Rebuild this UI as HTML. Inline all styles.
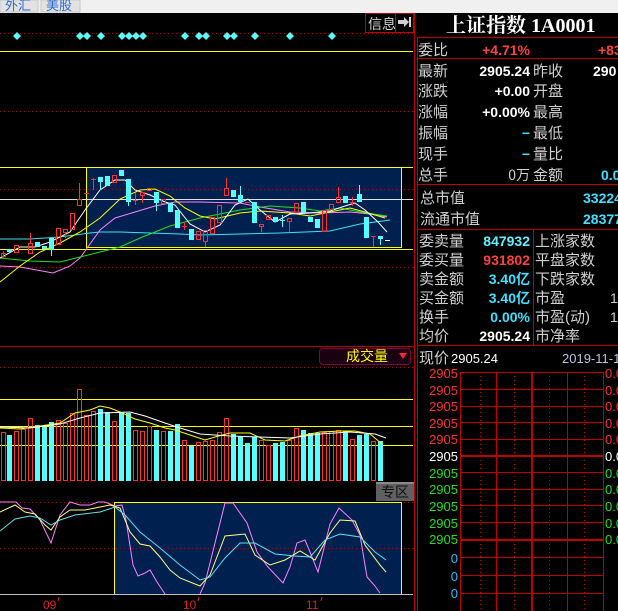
<!DOCTYPE html>
<html><head><meta charset="utf-8"><style>
html,body{margin:0;padding:0;background:#000;width:618px;height:611px;overflow:hidden}
svg{display:block}
text{font-family:"Liberation Sans","Noto Sans CJK SC",sans-serif}
.cn{font-family:"Noto Sans CJK SC","WenQuanYi Zen Hei",sans-serif}
</style></head><body>
<svg width="618" height="611" viewBox="0 0 618 611" xmlns="http://www.w3.org/2000/svg">
<rect x="0" y="0" width="618" height="611" fill="#000"/>
<rect x="0" y="0" width="618" height="13" fill="#f0f0f0"/>
<rect x="0" y="0" width="38" height="12" fill="#e2e2e2" stroke="#c8c8c8"/>
<rect x="41" y="0" width="39" height="12" fill="#e2e2e2" stroke="#c8c8c8"/>
<text x="5" y="10" font-size="13" fill="#2a6ad0" class="cn">外汇</text>
<text x="46" y="10" font-size="13" fill="#2a6ad0" class="cn">美股</text>

<rect x="365.5" y="13.5" width="48" height="19" fill="#000" stroke="#c00000"/>
<line x1="395.5" y1="13" x2="395.5" y2="33" stroke="#c00000"/>
<text x="368" y="29" font-size="14" fill="#d0d0d0" class="cn">信息</text>
<path d="M398 20h6v-3l5 5-5 5v-3h-6z" fill="#d0d0d0"/><rect x="409" y="17" width="2" height="10" fill="#d0d0d0"/>

<line x1="0" y1="33.5" x2="413" y2="33.5" stroke="#b00000" stroke-dasharray="1,3"/>
<g fill="#55ffff">
<path d="M17 32l4 4-4 4-4-4z"/><path d="M80 32l4 4-4 4-4-4z"/><path d="M87 32l4 4-4 4-4-4z"/><path d="M101 32l4 4-4 4-4-4z"/><path d="M122 32l4 4-4 4-4-4z"/><path d="M129 32l4 4-4 4-4-4z"/><path d="M136 32l4 4-4 4-4-4z"/><path d="M143 32l4 4-4 4-4-4z"/><path d="M185 32l4 4-4 4-4-4z"/><path d="M199 32l4 4-4 4-4-4z"/><path d="M206 32l4 4-4 4-4-4z"/><path d="M227 32l4 4-4 4-4-4z"/><path d="M234 32l4 4-4 4-4-4z"/><path d="M255 32l4 4-4 4-4-4z"/><path d="M290 32l4 4-4 4-4-4z"/><path d="M332 32l4 4-4 4-4-4z"/>
</g>
<line x1="0" y1="51.5" x2="413" y2="51.5" stroke="#ffff00"/>
<line x1="0" y1="111.5" x2="413" y2="111.5" stroke="#b00000" stroke-dasharray="1,3"/>
<line x1="0" y1="167.5" x2="413" y2="167.5" stroke="#ffff00"/>
<rect x="86.5" y="167.5" width="315" height="80" fill="#002050" stroke="#ffff00"/>
<line x1="0" y1="189.5" x2="413" y2="189.5" stroke="#b00000" stroke-dasharray="1,3"/>
<line x1="0" y1="199.5" x2="413" y2="199.5" stroke="#e0e0e0"/>
<line x1="0" y1="249.5" x2="413" y2="249.5" stroke="#ffff00"/>
<line x1="0" y1="267.5" x2="413" y2="267.5" stroke="#b00000" stroke-dasharray="1,3"/>

<g fill="none" stroke-width="1">
<polyline stroke="#40e0f0" points="0,239 30,239 60,237 90,233 100,232 120,232 180,234 200,235 240,234 280,233 330,231 360,224 390,220"/>
<polyline stroke="#ff80ff" points="0,266 20,267 53,273 70,266 80,258 90,244 100,230 115,218 135,212 155,206 175,202 200,202 240,203 260,207 290,212 320,213 350,212 370,214 387,217"/>
<polyline stroke="#20e020" points="0,258 30,261 60,262 80,257 100,252 120,247 140,238 170,226 200,218 240,210 270,206 300,208 320,211 340,208 360,212 387,216"/>
<polyline stroke="#ffff00" points="0,282 20,266 40,252 60,243 80,232 100,218 120,199 140,190 155,189 170,196 185,208 200,216 215,219 240,213 260,211 290,213 310,216 330,212 350,208 365,212 385,218"/>
<polyline stroke="#ffffff" points="0,258 20,247 35,247 50,242 70,232 85,210 100,190 115,180 125,180 135,190 150,195 165,202 175,205 190,224 205,232 220,225 235,205 248,199 260,210 275,222 290,214 310,213 330,211 345,206 355,203 365,210 378,222 387,232"/>
</g>
<g stroke-width="1">
<g fill="none" stroke="#ff3030">
<rect x="1.5" y="253.5" width="4" height="3"/><line x1="3.5" y1="251" x2="3.5" y2="259"/>
<rect x="14.5" y="245.5" width="4" height="7"/>
<rect x="28.5" y="243.5" width="4" height="10"/><line x1="30.5" y1="233" x2="30.5" y2="243"/>
<rect x="56.5" y="228.5" width="4" height="16"/>
<rect x="63.5" y="229.5" width="4" height="3"/><line x1="65.5" y1="233" x2="65.5" y2="238"/>
<rect x="70.5" y="213.5" width="4" height="16"/>
<rect x="77.5" y="199.5" width="4" height="6"/><line x1="79.5" y1="183" x2="79.5" y2="199"/>
<line x1="84" y1="193.5" x2="89" y2="193.5"/>
<line x1="93.5" y1="178" x2="93.5" y2="190"/><line x1="91" y1="179.5" x2="96" y2="179.5"/>
<rect x="112.5" y="175.5" width="4" height="7"/>
<line x1="133" y1="200.5" x2="138" y2="200.5"/><line x1="135.5" y1="193" x2="135.5" y2="205"/>
<rect x="140.5" y="192.5" width="4" height="3"/><line x1="142.5" y1="195" x2="142.5" y2="203"/>
<rect x="147.5" y="188.5" width="4" height="2"/>
<rect x="161.5" y="199.5" width="4" height="4"/>
<line x1="182" y1="226.5" x2="187" y2="226.5"/><line x1="184.5" y1="222" x2="184.5" y2="230"/>
<rect x="196.5" y="231.5" width="4" height="8"/>
<rect x="203.5" y="230.5" width="4" height="11"/><line x1="205.5" y1="241" x2="205.5" y2="247"/>
<rect x="210.5" y="217.5" width="4" height="16"/>
<rect x="217.5" y="205.5" width="4" height="17"/>
<rect x="224.5" y="188.5" width="4" height="7"/><line x1="226.5" y1="178" x2="226.5" y2="188"/>
<line x1="245" y1="202.5" x2="250" y2="202.5"/>
<rect x="259.5" y="224.5" width="4" height="2"/><line x1="261.5" y1="226" x2="261.5" y2="232"/>
<rect x="266.5" y="215.5" width="4" height="4"/>
<rect x="287.5" y="218.5" width="4" height="3"/><line x1="289.5" y1="221" x2="289.5" y2="232"/>
<rect x="294.5" y="203.5" width="4" height="9"/>
<rect x="322.5" y="210.5" width="4" height="21"/>
<rect x="329.5" y="204.5" width="4" height="5"/>
<rect x="336.5" y="197.5" width="4" height="5"/><line x1="338.5" y1="187" x2="338.5" y2="197"/>
<line x1="350" y1="202.5" x2="355" y2="202.5"/><line x1="352.5" y1="197" x2="352.5" y2="206"/>
<line x1="371" y1="236.5" x2="376" y2="236.5"/><line x1="373.5" y1="236" x2="373.5" y2="247"/>
</g>
<g fill="#55ffff" stroke="#55ffff">
<rect x="7.5" y="249.5" width="4" height="2"/>
<rect x="35.5" y="242.5" width="4" height="4"/>
<rect x="42.5" y="246.5" width="4" height="2"/>
<rect x="49.5" y="238.5" width="4" height="11"/><line x1="51.5" y1="250" x2="51.5" y2="256"/>
<rect x="98.5" y="177.5" width="4" height="4"/><line x1="100.5" y1="181" x2="100.5" y2="190"/>
<rect x="105.5" y="176.5" width="4" height="9"/>
<rect x="119.5" y="170.5" width="4" height="5"/>
<rect x="126.5" y="179.5" width="4" height="22"/><line x1="128.5" y1="202" x2="128.5" y2="206"/>
<rect x="154.5" y="192.5" width="4" height="10"/><line x1="156.5" y1="203" x2="156.5" y2="211"/>
<rect x="168.5" y="203.5" width="4" height="8"/>
<rect x="175.5" y="210.5" width="4" height="17"/>
<rect x="189.5" y="229.5" width="4" height="10"/>
<rect x="231.5" y="190.5" width="4" height="6"/>
<rect x="238.5" y="195.5" width="4" height="6"/><line x1="240.5" y1="186" x2="240.5" y2="195"/>
<rect x="252.5" y="202.5" width="4" height="20"/>
<rect x="273.5" y="217.5" width="4" height="4"/>
<line x1="280" y1="220.5" x2="285" y2="220.5"/><line x1="282.5" y1="215" x2="282.5" y2="227"/>
<rect x="301.5" y="202.5" width="4" height="10"/>
<rect x="308.5" y="217.5" width="4" height="4"/>
<rect x="315.5" y="219.5" width="4" height="8"/>
<rect x="343.5" y="196.5" width="4" height="6"/>
<rect x="357.5" y="194.5" width="4" height="7"/><line x1="359.5" y1="185" x2="359.5" y2="194"/>
<rect x="364.5" y="217.5" width="4" height="20"/>
<rect x="378.5" y="236.5" width="4" height="2"/><line x1="380.5" y1="239" x2="380.5" y2="245"/>
</g>
<line x1="385" y1="240.5" x2="390" y2="240.5" stroke="#fff"/>
</g>

<line x1="414.5" y1="13" x2="414.5" y2="611" stroke="#c00000"/>
<line x1="0" y1="346.5" x2="414" y2="346.5" stroke="#c00000"/>

<rect x="319.5" y="348.5" width="91" height="16" rx="3" fill="#1a0010" stroke="#800040"/>
<text x="346" y="361" font-size="14" fill="#ffff00" class="cn">成交量</text>
<path d="M399 353h8l-4 6z" fill="#ff2040"/>
<line x1="0" y1="367.5" x2="413" y2="367.5" stroke="#b00000" stroke-dasharray="1,3"/>
<line x1="0" y1="399.5" x2="413" y2="399.5" stroke="#ffff00"/>
<line x1="0" y1="426.5" x2="413" y2="426.5" stroke="#ffff00"/>
<line x1="0" y1="445.5" x2="413" y2="445.5" stroke="#ffff00"/>
<g fill="none" stroke="#ff3030">
<rect x="1.5" y="432.5" width="4" height="48"/><rect x="14.5" y="431.5" width="4" height="49"/><rect x="21.5" y="429.5" width="4" height="51"/><rect x="28.5" y="418.5" width="4" height="62"/>
<rect x="56.5" y="420.5" width="4" height="60"/><rect x="63.5" y="423.5" width="4" height="57"/><rect x="70.5" y="413.5" width="4" height="67"/><rect x="77.5" y="389.5" width="4" height="91"/><rect x="84.5" y="415.5" width="4" height="65"/><rect x="91.5" y="411.5" width="4" height="69"/>
<rect x="112.5" y="421.5" width="4" height="59"/><rect x="133.5" y="430.5" width="4" height="50"/><rect x="140.5" y="431.5" width="4" height="49"/><rect x="147.5" y="426.5" width="4" height="54"/><rect x="161.5" y="431.5" width="4" height="49"/>
<rect x="182.5" y="440.5" width="4" height="40"/><rect x="196.5" y="442.5" width="4" height="38"/><rect x="203.5" y="441.5" width="4" height="39"/><rect x="210.5" y="440.5" width="4" height="40"/><rect x="217.5" y="432.5" width="4" height="48"/><rect x="224.5" y="418.5" width="4" height="62"/>
<rect x="259.5" y="440.5" width="4" height="40"/><rect x="266.5" y="445.5" width="4" height="35"/><rect x="287.5" y="440.5" width="4" height="40"/><rect x="294.5" y="428.5" width="4" height="52"/>
<rect x="322.5" y="432.5" width="4" height="48"/><rect x="329.5" y="431.5" width="4" height="49"/><rect x="336.5" y="430.5" width="4" height="50"/><rect x="350.5" y="439.5" width="4" height="41"/><rect x="371.5" y="441.5" width="4" height="39"/>
</g>
<g fill="#55ffff">
<rect x="7" y="435" width="5" height="46"/><rect x="35" y="425" width="5" height="56"/><rect x="42" y="427" width="5" height="54"/><rect x="49" y="422" width="5" height="59"/>
<rect x="98" y="409" width="5" height="72"/><rect x="105" y="412" width="5" height="69"/><rect x="119" y="412" width="5" height="69"/><rect x="126" y="413" width="5" height="68"/>
<rect x="154" y="430" width="5" height="51"/><rect x="168" y="431" width="5" height="50"/><rect x="175" y="424" width="5" height="57"/><rect x="189" y="446" width="5" height="35"/>
<rect x="231" y="434" width="5" height="47"/><rect x="238" y="436" width="5" height="45"/><rect x="245" y="443" width="5" height="38"/><rect x="252" y="437" width="5" height="44"/>
<rect x="273" y="443" width="5" height="38"/><rect x="280" y="442" width="5" height="39"/><rect x="301" y="430" width="5" height="51"/><rect x="308" y="433" width="5" height="48"/><rect x="315" y="433" width="5" height="48"/>
<rect x="343" y="431" width="5" height="50"/><rect x="357" y="435" width="5" height="46"/><rect x="364" y="434" width="5" height="47"/><rect x="378" y="441" width="5" height="40"/>
</g>
<polyline fill="none" stroke="#ffff00" points="0,428 20,429 40,426 60,423 75,413 90,410 100,406 110,408 120,412 135,419 150,423 165,428 175,430 190,435 205,440 215,437 230,433 250,433 265,440 285,441 300,436 320,432 340,431 355,431 370,434 382,444"/>
<polyline fill="none" stroke="#ffffff" points="0,427 30,428 60,424 80,418 100,413 130,412 145,416 165,423 180,428 200,434 230,436 260,437 290,438 320,434 350,432 375,434 386,438"/>

<rect x="376" y="482" width="38" height="19" fill="#606060"/>
<rect x="376" y="482" width="38" height="2" fill="#8a8a8a"/>
<text x="381" y="497" font-size="14" fill="#101010" class="cn">专区</text>

<line x1="0" y1="502.5" x2="413" y2="502.5" stroke="#b00000" stroke-dasharray="1,3"/>
<rect x="114.5" y="502.5" width="287" height="92" fill="#002050" stroke="#ffff00"/>
<line x1="0" y1="548.5" x2="413" y2="548.5" stroke="#b00000" stroke-dasharray="1,3"/>
<line x1="0" y1="594.5" x2="413" y2="594.5" stroke="#c0c0c0"/>
<g fill="none">
<polyline stroke="#ff80ff" points="0,502 16,502 22,508 30,509 40,520 51,543 60,515 70,502 80,505 90,505 98,502 105,502 115,506 122,505 126,520 133,565 138,576 145,573 150,570 157,582 165,594"/>
<polyline stroke="#ff80ff" points="200,594 205,583 225,503 233,503 247,523 257,552 268,567 283,583 290,567 297,543 305,540 310,552 318,572 330,524 339,508 352,520 360,535 367,577 375,586 380,593"/>
<polyline stroke="#ffff80" points="0,512 15,505 25,512 35,514 45,525 51,530 60,517 70,510 85,510 100,507 110,505 120,508 130,532 140,544 150,546 160,557 170,570 180,578 200,586 210,575 225,536 245,534 255,555 270,565 285,560 300,551 315,560 330,533 340,520 355,521 365,545 380,565 386,572"/>
<polyline stroke="#60e0f0" points="0,531 15,519 30,516 40,518 51,525 60,520 75,515 100,512 115,507 125,515 140,532 160,548 180,565 200,580 210,577 225,558 240,543 255,543 275,554 295,556 310,557 325,540 340,534 360,537 375,552 386,560"/>
</g>
<g font-size="12" fill="#e02020"><text x="43" y="609">09</text><text x="183" y="609">10</text><text x="306" y="609">11</text></g>
<g stroke="#e02020"><line x1="59" y1="597" x2="58" y2="601"/><line x1="199" y1="597" x2="198" y2="601"/><line x1="322" y1="597" x2="321" y2="601"/></g>

<line x1="417.5" y1="37" x2="417.5" y2="611" stroke="#c00000"/>
<text x="446" y="32" font-size="20" font-weight="bold" fill="#fff" style="font-family:'Liberation Serif','Noto Serif CJK SC',serif">上证指数 1A0001</text>
<g stroke="#c00000">
<line x1="417" y1="37.5" x2="618" y2="37.5"/>
<line x1="417" y1="58.5" x2="618" y2="58.5"/>
<line x1="417" y1="184.5" x2="618" y2="184.5"/>
<line x1="417" y1="229.5" x2="618" y2="229.5"/>
<line x1="417" y1="345.5" x2="618" y2="345.5"/>
<line x1="533.5" y1="229" x2="533.5" y2="345"/>
</g>
<g font-size="15" fill="#d0d0d0" class="cn">
<text x="418" y="55">委比</text>
<text x="418" y="76">最新</text><text x="533" y="76">昨收</text>
<text x="418" y="96">涨跌</text><text x="533" y="96">开盘</text>
<text x="418" y="117">涨幅</text><text x="533" y="117">最高</text>
<text x="418" y="138">振幅</text><text x="533" y="138">最低</text>
<text x="418" y="159">现手</text><text x="533" y="159">量比</text>
<text x="418" y="180">总手</text><text x="533" y="180">金额</text>
<text x="420" y="203">总市值</text>
<text x="420" y="224">流通市值</text>
<text x="419" y="246">委卖量</text><text x="535" y="246">上涨家数</text>
<text x="419" y="265">委买量</text><text x="535" y="265">平盘家数</text>
<text x="419" y="284">卖金额</text><text x="535" y="284">下跌家数</text>
<text x="419" y="303">买金额</text><text x="535" y="303">市盈</text>
<text x="419" y="322">换手</text><text x="535" y="322">市盈(动)</text>
<text x="419" y="341">均价</text><text x="535" y="341">市净率</text>
<text x="419" y="363">现价</text>
</g>
<g font-size="14" font-weight="bold" text-anchor="end">
<text x="530" y="55" fill="#ff4040">+4.71%</text>
<text x="530" y="76" fill="#fff">2905.24</text>
<text x="530" y="96" fill="#fff">+0.00</text>
<text x="530" y="117" fill="#fff">+0.00%</text>
<text x="530" y="138" fill="#40e0ff">−</text>
<text x="530" y="159" fill="#40e0ff">−</text>
<text x="530" y="180" fill="#d0d0d0" font-weight="normal" class="cn">0万</text>
<text x="530" y="246" fill="#60f0ff">847932</text>
<text x="530" y="265" fill="#ff4040">931802</text>
<text x="530" y="284" fill="#40e0ff">3.40亿</text>
<text x="530" y="303" fill="#40e0ff">3.40亿</text>
<text x="530" y="322" fill="#40e0ff">0.00%</text>
<text x="530" y="341" fill="#fff">2905.24</text>
</g>
<g font-size="14" font-weight="bold">
<text x="598" y="55" fill="#ff4040">+83</text>
<text x="593" y="76" fill="#fff">290</text>
<text x="601" y="180" fill="#40e0ff">0.0</text>
<text x="583" y="203" fill="#40e0ff">33224</text>
<text x="583" y="224" fill="#40e0ff">28377</text>
<text x="610" y="303" fill="#d0d0d0" font-weight="normal">1</text>
<text x="610" y="322" fill="#d0d0d0" font-weight="normal">1</text>
</g>
<text x="451" y="363" font-size="13" fill="#fff">2905.24</text>
<text x="562" y="363" font-size="13" fill="#c0c0e0">2019-11-1</text>

<g stroke="#c00000">
<line x1="460.5" y1="372" x2="460.5" y2="611"/><line x1="496.5" y1="372" x2="496.5" y2="611"/>
<line x1="532" y1="372" x2="532" y2="611" stroke-width="2"/><line x1="567.5" y1="372" x2="567.5" y2="611"/><line x1="603.5" y1="372" x2="603.5" y2="611"/>
<g stroke-dasharray="1,3"><line x1="480.5" y1="372" x2="480.5" y2="611"/><line x1="514.5" y1="372" x2="514.5" y2="611"/><line x1="549.5" y1="372" x2="549.5" y2="611"/><line x1="584.5" y1="372" x2="584.5" y2="611"/></g>
<line x1="460" y1="372.5" x2="604" y2="372.5"/><line x1="460" y1="389.5" x2="604" y2="389.5"/><line x1="460" y1="406.5" x2="604" y2="406.5"/><line x1="460" y1="422.5" x2="604" y2="422.5"/><line x1="460" y1="439.5" x2="604" y2="439.5"/>
<line x1="460" y1="456" x2="604" y2="456" stroke-width="2"/>
<line x1="460" y1="472.5" x2="604" y2="472.5"/><line x1="460" y1="489.5" x2="604" y2="489.5"/><line x1="460" y1="505.5" x2="604" y2="505.5"/><line x1="460" y1="522.5" x2="604" y2="522.5"/>
<line x1="460" y1="540" x2="604" y2="540" stroke-width="2"/>
<line x1="460" y1="557.5" x2="604" y2="557.5"/><line x1="460" y1="575.5" x2="604" y2="575.5"/><line x1="460" y1="593.5" x2="604" y2="593.5"/>
</g>
<g font-size="13" text-anchor="end">
<text x="458" y="378" fill="#ff3030">2905</text><text x="458" y="395" fill="#ff3030">2905</text><text x="458" y="411" fill="#ff3030">2905</text><text x="458" y="428" fill="#ff3030">2905</text><text x="458" y="444" fill="#ff3030">2905</text>
<text x="458" y="461" fill="#fff">2905</text>
<text x="458" y="478" fill="#20e020">2905</text><text x="458" y="494" fill="#20e020">2905</text><text x="458" y="511" fill="#20e020">2905</text><text x="458" y="528" fill="#20e020">2905</text><text x="458" y="544" fill="#20e020">2905</text>
<text x="458" y="563" fill="#20c0ff">0</text><text x="458" y="581" fill="#20c0ff">0</text><text x="458" y="598" fill="#20c0ff">0</text>
</g>
<g font-size="13">
<text x="605" y="378" fill="#ff3030">0.0</text><text x="605" y="395" fill="#ff3030">0.0</text><text x="605" y="411" fill="#ff3030">0.0</text><text x="605" y="428" fill="#ff3030">0.0</text><text x="605" y="444" fill="#ff3030">0.0</text>
<text x="605" y="461" fill="#fff">0.0</text>
<text x="605" y="478" fill="#20e020">0.0</text><text x="605" y="494" fill="#20e020">0.0</text><text x="605" y="511" fill="#20e020">0.0</text><text x="605" y="528" fill="#20e020">0.0</text><text x="605" y="544" fill="#20e020">0.0</text>
</g>
</svg>
</body></html>
